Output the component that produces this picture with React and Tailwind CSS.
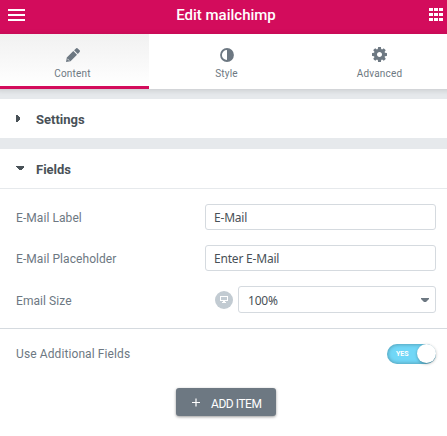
import React from 'react';

function Tab({ label, active, children }) {
  return (
    <button
      className={`flex h-[55px] w-[153px] flex-col items-center border-b-[3px] pt-[13px] text-[#6d7882] ${
        active ? 'border-[#d30c5c] bg-linear-to-b from-[#f1f1f1] to-white' : 'border-white bg-white pl-[2px]'
      }`}
    >
      <span className="flex h-[15px] items-center">{children}</span>
      <span className="mt-[6px] text-[10px] leading-[12px] tracking-[0.2px]">{label}</span>
    </button>
  );
}

function Section({ title, open }) {
  return (
    <div className="flex h-[39px] items-center bg-white pl-4 text-[#495157]">
      <svg width="8" height="9" viewBox="0 0 8 9" fill="currentColor" className="-mt-px" shapeRendering="crispEdges">
        {open ? <path d="M0 2h8v1L5 6H3L0 3z" /> : <path d="M0 1h1l3 3v1L1 8H0z" />}
      </svg>
      <span className="ml-3 mt-[2px] text-[13px] font-bold">{title}</span>
    </div>
  );
}

function TextField({ label, value }) {
  return (
    <label className="flex h-[26px] items-center justify-between">
      <span className="mt-px text-[12px] tracking-[0.07px]">{label}</span>
      <input
        defaultValue={value}
        className="h-[26px] w-[231px] rounded-[3px] border border-[#d5dadf] bg-white px-2 font-['Noto_Sans',sans-serif] text-[12px] tracking-[-0.2px] text-[#495157] outline-none"
      />
    </label>
  );
}

export default function App() {
  return (
    <div className="h-[436px] w-[447px] overflow-hidden bg-white font-[Roboto,sans-serif] text-[#6d7882]">
      <header className="flex h-[34px] items-center justify-between bg-[#d30c5c] pl-2 pr-[4px] pb-[5px] text-white">
        <svg width="17" height="12" viewBox="0 0 17 12" fill="currentColor">
          <path d="M0 0h17v2H0zM0 5h17v2H0zM0 10h17v2H0z" />
        </svg>
        <h1 className="mt-px mr-[2px] text-[15px] leading-[20px] font-medium">Edit mailchimp</h1>
        <svg width="14" height="13" viewBox="0 0 14 13" fill="currentColor">
          <path d="M0 0h4v3H0zM5 0h4v3H5zM10 0h4v3h-4zM0 5h4v3H0zM5 5h4v3H5zM10 5h4v3h-4zM0 10h4v3H0zM5 10h4v3H5zM10 10h4v3h-4z" />
        </svg>
      </header>

      <div className="h-[65px] bg-[#e6e9ec]">
        <nav className="-ml-1 flex w-[459px] shadow-[0_1px_6px_rgba(0,0,0,0.15)]">
          <Tab label="Content" active>
            <svg width="14" height="14" viewBox="0 0 14 14" fill="currentColor">
              <path d="M0 14l.8-4.500 6.500-6.500 3.700 3.700-6.500 6.500zM8.100 2.200L10 .4a1.200 1.200 0 0 1 1.700 0l1.900 1.900a1.200 1.200 0 0 1 0 1.700l-1.800 1.900z" />
              <path d="M1.400 10.800l1.800 1.800" stroke="#f6f6f6" strokeWidth=".8" />
            </svg>
          </Tab>
          <Tab label="Style">
            <svg width="14" height="14" viewBox="0 0 14 14">
              <circle cx="7" cy="7" r="6" fill="none" stroke="currentColor" strokeWidth="1.800" />
              <path d="M7 1a6 6 0 0 1 0 12z" fill="currentColor" />
            </svg>
          </Tab>
          <Tab label="Advanced">
            <svg width="15" height="15" viewBox="0 0 1536 1536" fill="currentColor">
              <path d="M1024 768q0-106-75-181t-181-75-181 75-75 181 75 181 181 75 181-75 75-181zm512-109v222q0 12-8 23t-20 13l-185 28q-19 54-39 91 35 50 107 138 10 12 10 25t-9 23q-27 37-99 108t-94 71q-12 0-26-9l-138-108q-44 23-91 38-16 136-29 186-7 28-36 28H657q-14 0-24.500-8.500T621 1506l-28-184q-49-16-90-37l-141 107q-10 9-25 9-14 0-25-11-126-114-165-168-7-10-7-23 0-12 8-23 15-21 51-66.500t54-70.500q-27-50-41-99L29 913q-13-2-21-12.500T0 877V655q0-12 8-23t19-13l186-28q14-46 39-92-40-57-107-138-10-12-10-24 0-10 9-23 26-36 98.500-107.500T337 135q13 0 26 10l138 107q44-23 91-38 16-136 29-186 7-28 36-28h222q14 0 24.500 8.500T915 30l28 184q49 16 90 37l142-107q9-9 24-9 13 0 25 10 129 119 165 170 7 8 7 22 0 12-8 23-15 21-51 66.500t-54 70.500q26 50 41 98l183 28q13 2 21 12.500t8 23.500z" />
            </svg>
          </Tab>
        </nav>
      </div>

      <div className="flex flex-col gap-[11px] bg-[#e6e9ec]">
        <Section title="Settings" />
        <Section title="Fields" open />
      </div>

      <div className="flex flex-col gap-[15px] border-y border-t-[#e6e9ec] border-b-[#d5dadf] pt-[15px] pr-[11px] pb-[15px] pl-4">
        <TextField label="E-Mail Label" value="E-Mail" />
        <TextField label="E-Mail Placeholder" value="Enter E-Mail" />
        <div className="flex h-[27px] items-center">
          <span className="mt-[2px] flex-1 text-[12px] tracking-[0.07px]">Email Size</span>
          <span className="mr-[5px] flex size-[18px] items-center justify-center rounded-full bg-[#c2cbd2]">
            <svg width="8" height="7" viewBox="0 0 8 7" fill="white">
              <path fillRule="evenodd" d="M0 0h8v5H5v1h1v1H2V6h1V5H0zM1 1v3h6V1z" />
            </svg>
          </span>
          <button className="flex h-[27px] w-[198px] items-center justify-between rounded-[3px] border border-[#d5dadf] bg-white pr-[6px] pl-[9px] text-[#495157]">
            <span className="mt-[2px] font-['Noto_Sans',sans-serif] text-[12px] tracking-[-0.2px]">100%</span>
            <svg width="8" height="4" viewBox="0 0 8 4" fill="#6d7882">
              <path d="M0 0h8v1L5 4H3L0 1z" />
            </svg>
          </button>
        </div>
      </div>

      <div className="flex h-[49px] items-center justify-between pr-[11px] pl-4">
        <span className="text-[12px] tracking-[0.1px]">Use Additional Fields</span>
        <button className="flex h-[20px] w-[49px] items-center justify-between rounded-full bg-[#71d7f7] pl-[9px] shadow-[inset_0_0_4px_rgba(0,0,0,0.35)]">
          <span className="mt-px text-[7px] leading-none font-bold text-white">YES</span>
          <span className="size-[19px] rounded-full bg-white shadow-[0_1px_3px_rgba(0,0,0,0.3)]" />
        </button>
      </div>

      <div className="flex justify-center pt-[10px] pl-[5px]">
        <button className="flex h-[28px] w-[100px] items-center rounded-[3px] bg-[#6d7882] pl-4 text-white shadow-[0_1px_3px_rgba(0,0,0,0.4)]">
          <svg width="8" height="9" viewBox="0 0 8 9" stroke="currentColor" strokeWidth="1.200">
            <path d="M4 0.500v8M0 4.500h8" />
          </svg>
          <span className="mt-[3px] ml-[11px] text-[12px] tracking-[-0.45px]">ADD ITEM</span>
        </button>
      </div>
    </div>
  );
}
